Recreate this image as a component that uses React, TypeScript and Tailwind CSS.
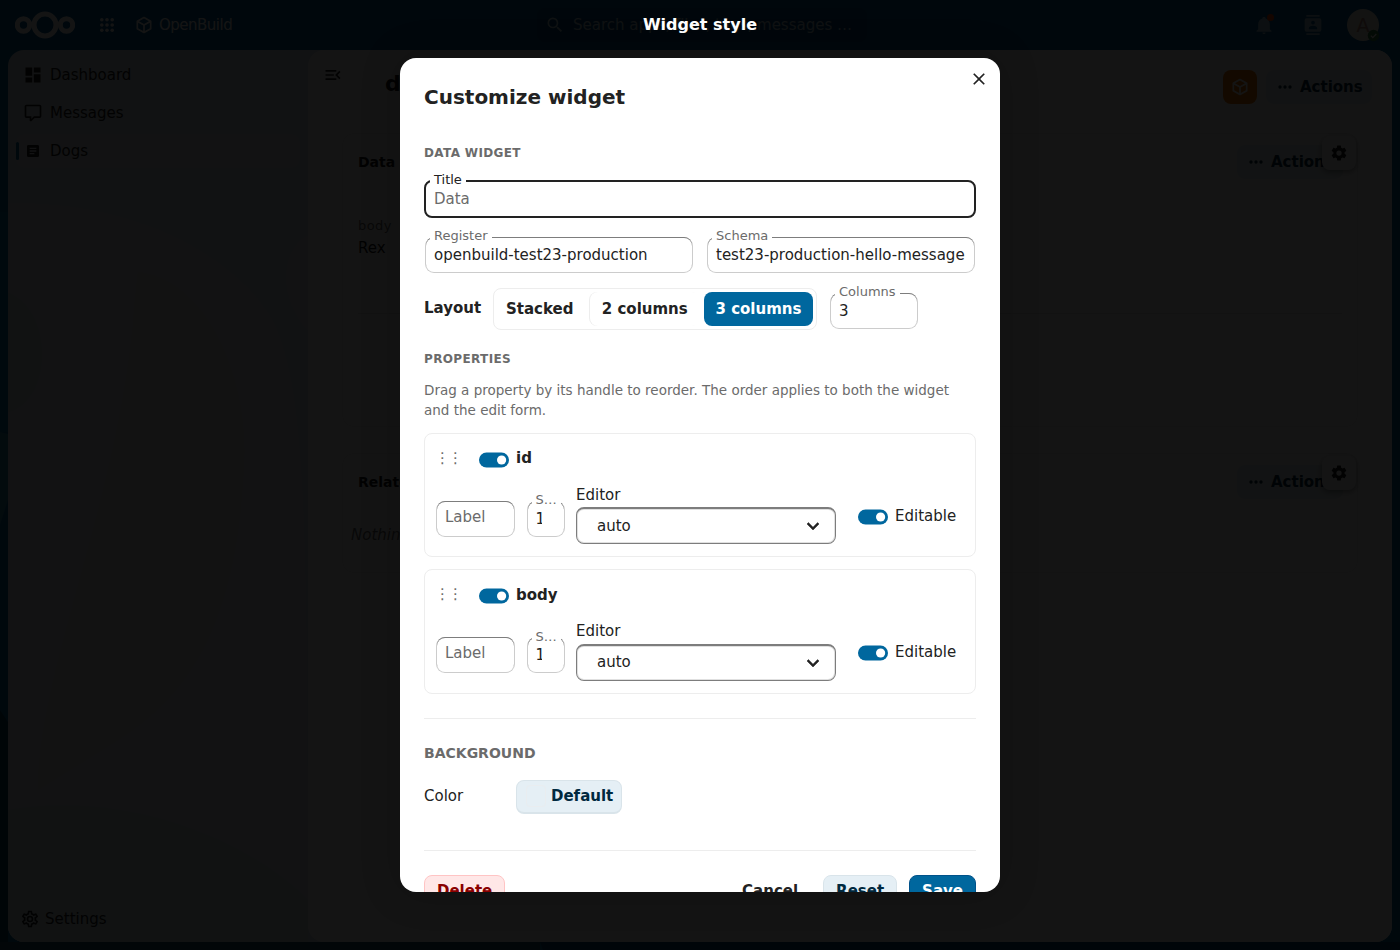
import { useState } from 'react'

const ICONS = {
  cube: 'M21,16.5C21,16.88 20.79,17.21 20.47,17.38L12.57,21.82C12.41,21.94 12.21,22 12,22C11.79,22 11.59,21.94 11.43,21.82L3.53,17.38C3.21,17.21 3,16.88 3,16.5V7.5C3,7.12 3.21,6.79 3.53,6.62L11.43,2.18C11.59,2.06 11.79,2 12,2C12.21,2 12.41,2.06 12.57,2.18L20.47,6.62C20.79,6.79 21,7.12 21,7.5V16.5M12,4.15L6.04,7.5L12,10.85L17.96,7.5L12,4.15M5,15.91L11,19.29V12.58L5,9.21V15.91M19,15.91V9.21L13,12.58V19.29L19,15.91Z',
  dashboard: 'M13,3V9H21V3M13,21H21V11H13M3,21H11V15H3M3,13H11V3H3V13Z',
  comment: 'M9,22A1,1 0 0,1 8,21V18H4A2,2 0 0,1 2,16V4C2,2.89 2.9,2 4,2H20A2,2 0 0,1 22,4V16A2,2 0 0,1 20,18H13.9L10.2,21.71C10,21.9 9.75,22 9.5,22V22H9M10,16V19.08L13.08,16H20V4H4V16H10Z',
  textBox: 'M14,17H7V15H14M17,13H7V11H17M17,9H7V7H17M19,3H5C3.89,3 3,3.89 3,5V19A2,2 0 0,0 5,21H19A2,2 0 0,0 21,19V5C21,3.89 20.1,3 19,3Z',
  menuOpen: 'M21,15.61L19.59,17L14.58,12L19.59,7L21,8.39L17.44,12L21,15.61M3,6H16V8H3V6M3,13V11H13V13H3M3,18V16H16V18H3Z',
  cog: 'M12,15.5A3.5,3.5 0 0,1 8.5,12A3.5,3.5 0 0,1 12,8.5A3.5,3.5 0 0,1 15.5,12A3.5,3.5 0 0,1 12,15.5M19.43,12.97C19.47,12.65 19.5,12.33 19.5,12C19.5,11.67 19.47,11.34 19.43,11L21.54,9.37C21.73,9.22 21.78,8.95 21.66,8.73L19.66,5.27C19.54,5.05 19.27,4.96 19.05,5.05L16.56,6.05C16.04,5.66 15.5,5.32 14.87,5.07L14.5,2.42C14.46,2.18 14.25,2 14,2H10C9.75,2 9.54,2.18 9.5,2.42L9.13,5.07C8.5,5.32 7.96,5.66 7.44,6.05L4.95,5.05C4.73,4.96 4.46,5.05 4.34,5.27L2.34,8.73C2.21,8.95 2.27,9.22 2.46,9.37L4.57,11C4.53,11.34 4.5,11.67 4.5,12C4.5,12.33 4.53,12.65 4.57,12.97L2.46,14.63C2.27,14.78 2.21,15.05 2.34,15.27L4.34,18.73C4.46,18.95 4.73,19.03 4.95,18.95L7.44,17.94C7.96,18.34 8.5,18.68 9.13,18.93L9.5,21.58C9.54,21.82 9.75,22 10,22H14C14.25,22 14.46,21.82 14.5,21.58L14.87,18.93C15.5,18.67 16.04,18.34 16.56,17.94L19.05,18.95C19.27,19.03 19.54,18.95 19.66,18.73L21.66,15.27C21.78,15.05 21.73,14.78 21.54,14.63L19.43,12.97Z',
  cogOutline: 'M12,8A4,4 0 0,1 16,12A4,4 0 0,1 12,16A4,4 0 0,1 8,12A4,4 0 0,1 12,8M12,10A2,2 0 0,0 10,12A2,2 0 0,0 12,14A2,2 0 0,0 14,12A2,2 0 0,0 12,10M10,22C9.75,22 9.54,21.82 9.5,21.58L9.13,18.93C8.5,18.68 7.96,18.34 7.44,17.94L4.95,18.95C4.73,19.03 4.46,18.95 4.34,18.73L2.34,15.27C2.21,15.05 2.27,14.78 2.46,14.63L4.57,12.97L4.5,12L4.57,11L2.46,9.37C2.27,9.22 2.21,8.95 2.34,8.73L4.34,5.27C4.46,5.05 4.73,4.96 4.95,5.05L7.44,6.05C7.96,5.66 8.5,5.32 9.13,5.07L9.5,2.42C9.54,2.18 9.75,2 10,2H14C14.25,2 14.46,2.18 14.5,2.42L14.87,5.07C15.5,5.32 16.04,5.66 16.56,6.05L19.05,5.05C19.27,4.96 19.54,5.05 19.66,5.27L21.66,8.73C21.79,8.95 21.73,9.22 21.54,9.37L19.43,11L19.5,12L19.43,13L21.54,14.63C21.73,14.78 21.79,15.05 21.66,15.27L19.66,18.73C19.54,18.95 19.27,19.04 19.05,18.95L16.56,17.95C16.04,18.34 15.5,18.68 14.87,18.93L14.5,21.58C14.46,21.82 14.25,22 14,22H10M11.25,4L10.88,6.61C9.68,6.86 8.62,7.5 7.85,8.39L5.44,7.35L4.69,8.65L6.8,10.2C6.4,11.37 6.4,12.64 6.8,13.8L4.68,15.36L5.43,16.66L7.86,15.62C8.63,16.5 9.68,17.14 10.87,17.38L11.24,20H12.76L13.13,17.39C14.32,17.14 15.37,16.5 16.14,15.62L18.57,16.66L19.32,15.36L17.2,13.81C17.6,12.64 17.6,11.37 17.2,10.2L19.31,8.65L18.56,7.35L16.15,8.39C15.38,7.5 14.32,6.86 13.12,6.62L12.75,4H11.25Z',
  magnify: 'M9.5,3A6.5,6.5 0 0,1 16,9.5C16,11.11 15.41,12.59 14.44,13.73L14.71,14H15.5L20.5,19L19,20.5L14,15.5V14.71L13.73,14.44C12.59,15.41 11.11,16 9.5,16A6.5,6.5 0 0,1 3,9.5A6.5,6.5 0 0,1 9.5,3M9.5,5C7,5 5,7 5,9.5C5,12 7,14 9.5,14C12,14 14,12 14,9.5C14,7 12,5 9.5,5Z',
  bell: 'M21,19V20H3V19L5,17V11C5,7.9 7.03,5.17 10,4.29C10,4.19 10,4.1 10,4A2,2 0 0,1 12,2A2,2 0 0,1 14,4C14,4.1 14,4.19 14,4.29C16.97,5.17 19,7.9 19,11V17L21,19M14,21A2,2 0 0,1 12,23A2,2 0 0,1 10,21',
  contacts: 'M20,0H4V2H20V0M4,24H20V22H4V24M20,4H4A2,2 0 0,0 2,6V18A2,2 0 0,0 4,20H20A2,2 0 0,0 22,18V6A2,2 0 0,0 20,4M12,6.75A2.25,2.25 0 0,1 14.25,9A2.25,2.25 0 0,1 12,11.25A2.25,2.25 0 0,1 9.75,9A2.25,2.25 0 0,1 12,6.75M17,17H7V15.5C7,13.83 10.33,13 12,13C13.67,13 17,13.83 17,15.5V17Z',
  dots: 'M16,12A2,2 0 0,1 18,10A2,2 0 0,1 20,12A2,2 0 0,1 18,14A2,2 0 0,1 16,12M10,12A2,2 0 0,1 12,10A2,2 0 0,1 14,12A2,2 0 0,1 12,14A2,2 0 0,1 10,12M4,12A2,2 0 0,1 6,10A2,2 0 0,1 8,12A2,2 0 0,1 6,14A2,2 0 0,1 4,12Z',
  chevron: 'M7.41,8.58L12,13.17L16.59,8.58L18,10L12,16L6,10L7.41,8.58Z',
  close: 'M19,6.41L17.59,5L12,10.59L6.41,5L5,6.41L10.59,12L5,17.59L6.41,19L12,13.41L17.59,19L19,17.59L13.41,12L19,6.41Z',
}

function Icon({ name, size = 20, className = '' }: { name: keyof typeof ICONS; size?: number; className?: string }) {
  return (
    <svg width={size} height={size} viewBox="0 0 24 24" fill="currentColor" className={`shrink-0 ${className}`}>
      <path d={ICONS[name]} />
    </svg>
  )
}

const NAV = [
  { label: 'Dashboard', icon: 'dashboard' as const, size: 20 },
  { label: 'Messages', icon: 'comment' as const, size: 20 },
  { label: 'Dogs', icon: 'textBox' as const, size: 16 },
]

const LAYOUTS = ['Stacked', '2 columns', '3 columns']

export default function App() {
  return (
    <div className="relative h-[950px] w-[1400px] overflow-hidden bg-[#00679e] font-['DejaVu_Sans',sans-serif] text-[15px] leading-[22px] text-[#222222]">
      <Wallpaper />
      <div className="relative flex h-full flex-col">
        <TopBar />
        <div className="mx-2 mb-2 flex min-h-0 flex-1 overflow-hidden rounded-2xl bg-[#d8e1e8]">
          <Sidebar />
          <Content />
        </div>
      </div>
      <StyleModal />
    </div>
  )
}

/** Page wallpaper, only seen around the edges of the app. */
function Wallpaper() {
  return (
    <svg className="absolute inset-0" width="1400" height="950" viewBox="0 0 1400 950">
      <path d="M0 0H1400V50H0Z" fill="#005a94" />
      <path d="M0 212H8V432H0Z" fill="#006fa8" />
      <path d="M0 432L8 434V500L0 525Z" fill="#2b87a3" />
      <path d="M0 710L8 722V950H0Z" fill="#0b3f5e" />
      <path d="M0 942H540V950H0Z" fill="#1c4c64" />
      <path d="M540 942H1400V950H543Z" fill="#00466f" />
    </svg>
  )
}

function TopBar() {
  return (
    <header className="flex h-[50px] shrink-0 items-center text-white">
      <svg className="ml-[15px]" width="60" height="28" viewBox="0 0 60 28" fill="none" stroke="currentColor" strokeWidth="5">
        <circle cx="30" cy="14" r="11" />
        <circle cx="8.5" cy="14" r="6.2" />
        <circle cx="51.5" cy="14" r="6.2" />
      </svg>
      <svg className="ml-[25px]" width="14" height="14" viewBox="0 0 14 14" fill="currentColor">
        {[1.8, 7, 12.2].map(y => [1.8, 7, 12.2].map(x => <circle key={`${x}-${y}`} cx={x} cy={y} r="1.8" />))}
      </svg>
      <Icon name="cube" className="ml-5" />
      <span className="ml-[5px] w-[73px] tracking-[-0.5px]">OpenBuild</span>
      <div className="ml-[305px] flex h-[34px] w-[330px] items-center rounded-lg bg-black/10 pl-2 opacity-75">
        <Icon name="magnify" />
        <span className="ml-2 whitespace-nowrap">Search apps, files, tags, messages …</span>
      </div>
      <div className="ml-auto flex items-center pr-[21px]">
        <div className="relative">
          <Icon name="bell" className="opacity-60" />
          <span className="absolute -top-px right-0 size-[7px] rounded-full bg-[#ff4402]" />
        </div>
        <Icon name="contacts" className="ml-[29px] opacity-60" />
        <div className="relative ml-6 flex size-8 items-center justify-center rounded-full bg-[#f3efe0] text-[19px] text-[#b88c7a]">
          A
          <svg className="absolute -right-px -bottom-px" width="13" height="13" viewBox="0 0 13 13">
            <circle cx="6.5" cy="6.5" r="5.8" fill="#2d7b41" />
            <path d="M3.8 6.6L5.8 8.6L9.3 5" fill="none" stroke="white" strokeWidth="1.3" />
          </svg>
        </div>
      </div>
    </header>
  )
}

function Sidebar() {
  return (
    <nav className="relative flex w-[300px] flex-col overflow-hidden pt-2">
      <svg className="absolute inset-0" width="300" height="892" viewBox="0 0 300 892">
        <path d="M0 153C120 150 220 200 262 265C300 330 300 480 300 892H0Z" fill="#dce2ea" />
        <path d="M130 222C200 230 240 330 236 410C230 560 190 640 110 690L30 740C30 620 115 440 127 250Z" fill="#dde6dd" />
        <path d="M190 295C220 330 226 380 216 430C195 520 170 560 120 600C120 480 160 380 176 310Z" fill="#e4e1dc" />
        <path d="M300 185C270 200 270 250 300 282Z" fill="#dce2ea" />
        <path d="M0 243C45 260 45 350 0 362Z" fill="#d2e2e4" />
        <path d="M0 760C120 740 240 790 300 850V892H0Z" fill="#d2e3e6" />
      </svg>
      <ul className="relative flex flex-1 flex-col gap-1 px-2">
        {NAV.map(item => (
          <li
            key={item.label}
            className={`relative flex h-[34px] items-center rounded-lg ${item.label === 'Dogs' ? 'bg-white/10' : ''}`}
          >
            {item.label === 'Dogs' && <span className="absolute left-0 h-[18px] w-[3px] rounded bg-[#00679e]" />}
            <span className="flex w-[34px] justify-center">
              <Icon name={item.icon} size={item.size} />
            </span>
            <span>{item.label}</span>
          </li>
        ))}
      </ul>
      <div className="relative flex h-[46px] items-center pl-3">
        <Icon name="cogOutline" />
        <span className="ml-[5px]">Settings</span>
      </div>
    </nav>
  )
}

function Content() {
  return (
    <main className="flex-1 rounded-l-2xl bg-white pt-5 pr-5">
      <div className="flex h-[34px] items-center">
        <Icon name="menuOpen" className="-mt-[25px] ml-[15px]" />
        <h1 className="-mt-[7px] ml-[42px] flex-1 text-[22px] font-bold">dogs</h1>
        <span className="flex size-[34px] items-center justify-center rounded-lg bg-[#f07800] text-white">
          <Icon name="cube" />
        </span>
        <ActionsButton className="ml-[9px]" />
      </div>

      <Widget title="Data" className="mt-[29px] h-[294px]">
        <div className="mx-[15px] h-[122px] border-b border-[#dddddd] pt-[23px]">
          <div className="text-[13px] tracking-[0.4px] text-[#6b6b6b]">body</div>
          <div>Rex</div>
        </div>
      </Widget>
      <Widget title="Related" className="mt-[26px] h-[120px]">
        <p className="pt-[12px] pl-2 text-[#6b6b6b] italic">Nothing here yet</p>
      </Widget>
    </main>
  )
}

function ActionsButton({ className = '' }: { className?: string }) {
  return (
    <span className={`flex h-[34px] w-[106px] items-center rounded-lg bg-[#e5eff5] pl-[9px] font-bold text-[#00293f] ${className}`}>
      <Icon name="dots" />
      <span className="ml-[5px]">Actions</span>
    </span>
  )
}

function Widget({ title, className, children }: { title: string; className: string; children: React.ReactNode }) {
  return (
    <section className={`relative mr-[14px] ml-[34px] rounded-xl border border-[#ededed] ${className}`}>
      <div className="flex h-[58px] items-center border-b border-[#f5f5f5] pr-[14px] pb-[2px] pl-[15px]">
        <h2 className="flex-1 text-[14px] font-bold">{title}</h2>
        <ActionsButton />
      </div>
      <span className="absolute top-[2px] right-[1px] flex size-[34px] items-center justify-center rounded-lg bg-white shadow-[0_2px_6px_rgba(0,0,0,0.4)]">
        <Icon name="cog" size={18} />
      </span>
      {children}
    </section>
  )
}

function StyleModal() {
  const [layout, setLayout] = useState('3 columns')

  return (
    <div className="absolute inset-0 flex flex-col items-center bg-black/92">
      <div className="flex h-[50px] items-center text-[16px] font-bold text-white">Widget style</div>
      <div className="relative mt-2 h-[834px] w-[600px] overflow-hidden rounded-2xl bg-white px-6 shadow-[0_0_40px_rgba(0,0,0,0.2)]">
        <button className="absolute top-1 right-1 flex size-[34px] items-center justify-center">
          <Icon name="close" />
        </button>

        <h2 className="pt-[24px] text-[20px] leading-[30px] font-bold">Customize widget</h2>

        <SectionTitle className="mt-[32px]">DATA WIDGET</SectionTitle>
        <div className="relative mt-[18px] h-[38px] rounded-lg border-2 border-[#222222] pl-2 leading-[34px] text-[#6b6b6b]">
          <span className="absolute -top-[11px] left-1 bg-white px-1 text-[13px] leading-[18px] text-[#222222]">Title</span>
          Data
        </div>
        <div className="mt-[18px] grid grid-cols-2 gap-3">
          <Field label="Register" value="openbuild-test23-production" />
          <Field label="Schema" value="test23-production-hello-message" />
        </div>

        <div className="mt-[14px] flex h-[42px] items-center">
          <span className="w-[69px] pb-[2px] font-bold">Layout</span>
          <div className="flex h-[42px] w-[324px] items-center gap-[4.3px] rounded-lg border border-[#ededed]">
            {LAYOUTS.map(l => (
              <button
                key={l}
                onClick={() => setLayout(l)}
                className={`h-[34px] rounded-lg px-3 font-bold whitespace-nowrap ${
                  l === layout ? 'bg-[#00679e] pr-[11.9px] pl-[11.5px] text-white' : l === '2 columns' ? 'shadow-[-1px_0_0_#ededed]' : ''
                }`}
              >
                {l}
              </button>
            ))}
          </div>
          <Field label="Columns" value="3" className="mt-[3px] ml-3 w-[90px]" />
        </div>

        <SectionTitle className="mt-[20px]">PROPERTIES</SectionTitle>
        <p className="mt-[12px] text-[13.5px] leading-[20px] text-[#6b6b6b]">
          Drag a property by its handle to reorder. The order applies to both the widget and the edit form.
        </p>

        <div className="mt-[13px] flex flex-col gap-3">
          <PropertyCard name="id" />
          <PropertyCard name="body" />
        </div>

        <hr className="mt-6 border-[#ededed]" />
        <h3 className="mt-[23px] text-[14px] font-bold text-[#6b6b6b]">BACKGROUND</h3>
        <div className="mt-4 flex items-center">
          <span className="w-[92px] pb-[2px]">Color</span>
          <button className="flex h-[34px] items-center rounded-lg border border-b-2 border-[#d9e4ea] bg-[#e5eff5] pr-2 pl-[9px] font-bold text-[#00293f]">
            <span className="mr-[5px] h-[22px] w-5 rounded border border-[#e9edf0]" />
            Default
          </button>
        </div>

        <div className="mt-9 flex items-center gap-3 border-t border-[#ededed] pt-6 font-bold">
          <button className="h-[34px] rounded-lg border border-[#ffc4c4] bg-[#ffe7e7] px-3 pb-[2px] text-[#8a0000]">Delete</button>
          <button className="ml-auto h-[34px] px-[13px] pb-[2px]">Cancel</button>
          <button className="h-[34px] rounded-lg border border-[#d9e4ea] bg-[#e5eff5] px-3 pb-[2px] text-[#00293f]">Reset</button>
          <button className="h-[34px] rounded-lg border border-[#00528a] bg-[#00679e] px-3 pb-[2px] text-white">Save</button>
        </div>
      </div>
    </div>
  )
}

function SectionTitle({ children, className = '' }: { children: React.ReactNode; className?: string }) {
  return (
    <h3 className={`text-[12px] leading-[18px] font-bold tracking-[0.36px] text-[#6b6b6b] ${className}`}>{children}</h3>
  )
}

/** Outlined input with its label sitting on the top border. */
function Field({ label, value, className = '' }: { label: string; value: string; className?: string }) {
  return (
    <div className={`p-[2px] ${className}`}>
      <div className="relative h-[34px] rounded-lg bg-white pl-2 leading-[34px] shadow-[0_-1px_0_#7d7d7d,0_0_0_1px_#cccccc]">
        <span className="absolute -top-[11px] left-1 bg-white px-1 text-[13px] leading-[18px] text-[#6b6b6b]">{label}</span>
        {value}
      </div>
    </div>
  )
}

function Toggle() {
  return (
    <svg width="30" height="16" viewBox="0 0 30 16" className="shrink-0">
      <rect y="0.5" width="30" height="15" rx="7.5" fill="#00679e" />
      <circle cx="22.6" cy="8" r="4.6" fill="white" />
    </svg>
  )
}

function PropertyCard({ name }: { name: string }) {
  return (
    <div className="h-[124.33px] rounded-lg border border-[#ededed] px-[11px]">
      <div className="flex h-[48px] items-center">
        <span className="-ml-px w-[44px] text-[15px] tracking-[-2px] text-[#6b6b6b]">⋮⋮</span>
        <span className="mt-[3px]">
          <Toggle />
        </span>
        <span className="mt-[0.4px] ml-[7px] font-bold">{name}</span>
      </div>
      <div className="flex pt-[2px]">
        <div className="mt-[18px] ml-px h-[34px] w-[77px] rounded-lg pl-2 leading-[30px] text-[#6b6b6b] shadow-[0_-1px_0_#7d7d7d,0_0_0_1px_#cccccc]">
          Label
        </div>
        <div className="relative mt-[18px] ml-[14px] h-[34px] w-[36px] rounded-lg pl-[8px] leading-[34px] shadow-[0_-1px_0_#7d7d7d,0_0_0_1px_#cccccc]">
          <span className="absolute -top-[10.8px] left-[3.5px] bg-white px-1 text-[13px] leading-[18px] text-[#6b6b6b]">S…</span>
          <span className="-ml-[0.5px] block w-[6px] overflow-hidden">1</span>
        </div>
        <div className="ml-[12px] w-[260px]">
          <div className="leading-[22px]">Editor</div>
          <div className="mt-[1.3px] flex h-[37px] items-center rounded-lg border border-t-2 border-[#7d7d7d] pr-[10px] pl-5 shadow-[inset_0_0_0_1px_#e0e0e0]">
            <span className="flex-1 pb-[1px]">auto</span>
            <Icon name="chevron" size={24} className="stroke-current stroke-[0.5]" />
          </div>
        </div>
        <div className="mt-[20px] ml-[22px] flex h-[24px] items-center">
          <span className="mt-[2px]">
            <Toggle />
          </span>
          <span className="ml-[7px]">Editable</span>
        </div>
      </div>
    </div>
  )
}
